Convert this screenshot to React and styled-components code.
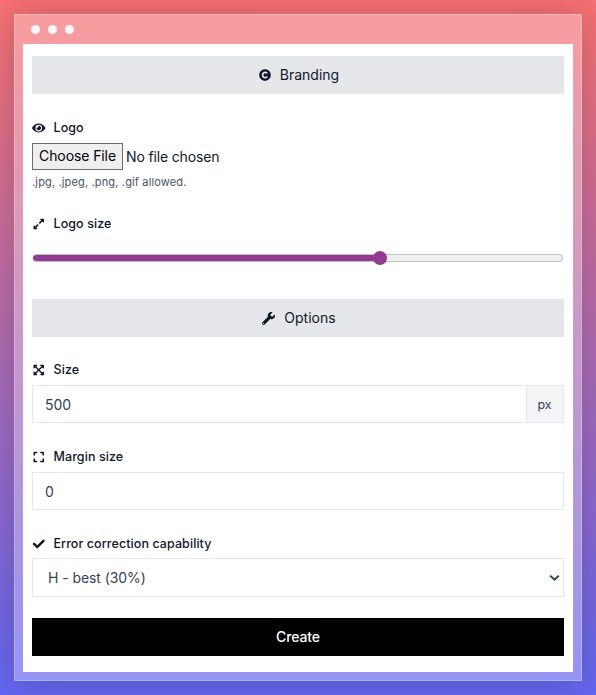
import styled, { createGlobalStyle } from "styled-components";
import {
  FaCopyright,
  FaEye,
  FaExpandAlt,
  FaWrench,
  FaExpandArrowsAlt,
  FaExpand,
  FaCheck,
} from "react-icons/fa";

const GlobalStyle = createGlobalStyle`
  * {
    box-sizing: border-box;
  }

  body {
    margin: 0;
    font-family: Inter, sans-serif;
    color: #0f172a;
  }

  input,
  select,
  button {
    font-family: inherit;
  }
`;

const Page = styled.div`
  height: 695px;
  padding: 14px;
  overflow: hidden;
  background: linear-gradient(to bottom, #f87171, #6366f1);
`;

const Window = styled.div`
  height: 667px;
  display: flex;
  flex-direction: column;
  padding: 0 8px 8px;
  border: 1px solid rgba(255, 255, 255, 0.25);
  background: rgba(255, 255, 255, 0.31);
  box-shadow: 0 0 32px rgba(0, 0, 0, 0.2);
`;

const TitleBar = styled.div`
  height: 29px;
  display: flex;
  align-items: center;
  gap: 8px;
  padding-left: 8px;
`;

const Dot = styled.span`
  width: 9px;
  height: 9px;
  border-radius: 50%;
  background: rgba(255, 255, 255, 0.9);
`;

const Form = styled.form`
  flex: 1;
  padding: 12px 9px 0;
  background: #fff;
`;

const SectionTitle = styled.div`
  height: 38px;
  display: flex;
  align-items: center;
  justify-content: center;
  gap: 9px;
  padding-left: 2px;
  font-size: 14px;
  background: #e5e7eb;

  svg {
    width: 12px;
    height: 12px;
  }

  span {
    padding-bottom: 2px;
  }
`;

const WrenchIcon = styled(FaWrench)`
  && {
    width: 13px;
    height: 13px;
  }
`;

const Field = styled.div`
  height: ${(props) => props.$height}px;
  padding-top: ${(props) => props.$top}px;
`;

const Label = styled.label`
  height: 18px;
  display: flex;
  align-items: center;
  gap: 8px;
  margin-bottom: ${(props) => props.$gap || 7}px;
  font-size: 12.5px;
  font-weight: 500;
  letter-spacing: 0.08px;

  svg {
    width: 13.5px;
    height: ${(props) => props.$icon || 12}px;
    margin-top: 1px;
  }
`;

const FileRow = styled.div`
  display: flex;
  align-items: center;
  gap: 3px;
  font-size: 14px;
  letter-spacing: -0.15px;
`;

const FileButton = styled.button`
  width: 91px;
  height: 27px;
  padding: 0 0 2px;
  border: 1px solid #6b6b6b;
  background: #efefef;
  color: #000;
  font-size: 14px;
  letter-spacing: -0.1px;
`;

const Hint = styled.div`
  margin-top: 4px;
  font-size: 11px;
  line-height: 16px;
  letter-spacing: 0.15px;
  color: #475569;
`;

const Slider = styled.input`
  display: block;
  width: 530px;
  height: 14px;
  margin: 0 1px;
  appearance: none;
  background: transparent;

  &::-webkit-slider-runnable-track {
    height: 8px;
    border: 1px solid #c0c0c0;
    border-left-color: #933b94;
    border-radius: 4px;
    background: linear-gradient(to right, #933b94 348px, #efefef 348px);
    background-origin: border-box;
  }

  &::-webkit-slider-thumb {
    appearance: none;
    width: 14px;
    height: 14px;
    margin-top: -4px;
    border-radius: 50%;
    background: #933b94;
  }
`;

const InputGroup = styled.div`
  height: 38px;
  display: flex;
  border: 1px solid #e5e7eb;
`;

const Input = styled.input`
  flex: 1;
  min-width: 0;
  padding: 0 12px;
  border: 0;
  background: #fff;
  color: #334155;
  font-size: 14px;
`;

const Unit = styled.span`
  width: 37px;
  display: flex;
  align-items: center;
  justify-content: center;
  padding-right: 1px;
  border-left: 1px solid #e5e7eb;
  background: #f3f4f6;
  color: #334155;
  font-size: 12.5px;
`;

const SelectBox = styled.div`
  height: 39px;
  display: flex;
  align-items: center;
  justify-content: space-between;
  padding: 0 3px 0 15px;
  border: 1px solid #e5e7eb;
  color: #334155;
  font-size: 14px;
  letter-spacing: -0.08px;
`;

const CreateButton = styled.button`
  width: 100%;
  height: 38px;
  display: block;
  padding: 0 0 2px;
  border: 0;
  background: #000;
  color: #fff;
  font-size: 14px;
  font-weight: 500;
  letter-spacing: -0.1px;
`;

const App = () => {
  return (
    <>
      <GlobalStyle />
      <Page>
        <Window>
          <TitleBar>
            <Dot />
            <Dot />
            <Dot />
          </TitleBar>
          <Form>
            <SectionTitle>
              <FaCopyright />
              <span>Branding</span>
            </SectionTitle>
            <Field $height={120} $top={24}>
              <Label>
                <FaEye />
                Logo
              </Label>
              <FileRow>
                <FileButton type="button">Choose File</FileButton>
                <span>No file chosen</span>
              </FileRow>
              <Hint>.jpg, .jpeg, .png, .gif allowed.</Hint>
            </Field>
            <Field $height={85} $top={0}>
              <Label $gap={19}>
                <FaExpandAlt />
                Logo size
              </Label>
              <Slider type="range" min="0" max="516" defaultValue="340" />
            </Field>
            <SectionTitle>
              <WrenchIcon />
              <span>Options</span>
            </SectionTitle>
            <Field $height={86} $top={23}>
              <Label>
                <FaExpandArrowsAlt />
                Size
              </Label>
              <InputGroup>
                <Input defaultValue="500" />
                <Unit>px</Unit>
              </InputGroup>
            </Field>
            <Field $height={87} $top={24}>
              <Label>
                <FaExpand />
                Margin size
              </Label>
              <InputGroup>
                <Input defaultValue="0" />
              </InputGroup>
            </Field>
            <Field $height={108} $top={24}>
              <Label $gap={6}>
                <FaCheck />
                Error correction capability
              </Label>
              <SelectBox>
                <span>H - best (30%)</span>
                <svg width="11" height="8" viewBox="0 0 11 8">
                  <path
                    d="M1.2 1.6 5.5 5.7 9.8 1.6"
                    fill="none"
                    stroke="#334155"
                    strokeWidth="2"
                  />
                </svg>
              </SelectBox>
            </Field>
            <CreateButton type="button">Create</CreateButton>
          </Form>
        </Window>
      </Page>
    </>
  );
};

export default App;
